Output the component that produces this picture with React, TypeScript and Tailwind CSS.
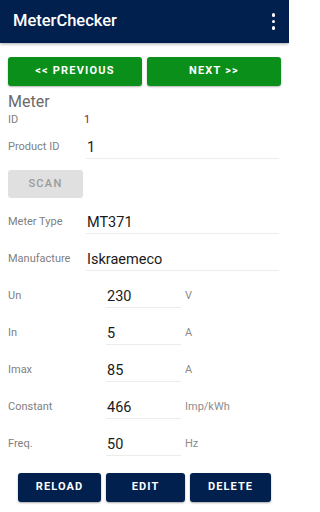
import React from "react";

const font = { fontFamily: "Roboto, 'Liberation Sans', sans-serif" };

interface Row {
  label: string;
  value: string;
  unit?: string;
}

const TEXT_ROWS: Row[] = [
  { label: "Meter Type", value: "MT371" },
  { label: "Manufacture", value: "Iskraemeco" },
];

const NUM_ROWS: Row[] = [
  { label: "Un", value: "230", unit: "V" },
  { label: "In", value: "5", unit: "A" },
  { label: "Imax", value: "85", unit: "A" },
  { label: "Constant", value: "466", unit: "Imp/kWh" },
  { label: "Freq.", value: "50", unit: "Hz" },
];

function Field({ value, className }: { value: string; className: string }) {
  return (
    <div className={`h-[21px] border-b border-[#ececec] text-[14.5px] leading-[20px] text-[#1a1a1a] ${className}`}>
      {value}
    </div>
  );
}

export default function App() {
  return (
    <div className="w-[289px] h-[512px] bg-white overflow-hidden" style={font}>
      <div className="h-[43px] bg-[#01204e] flex items-center justify-between pl-[13px] pr-[14px] shadow-[0_1px_3px_rgba(0,0,0,0.35)] relative">
        <span className="text-white text-[16.5px] font-medium">MeterChecker</span>
        <div className="flex flex-col gap-[3px]">
          <span className="w-[3.5px] h-[3.5px] rounded-full bg-white" />
          <span className="w-[3.5px] h-[3.5px] rounded-full bg-white" />
          <span className="w-[3.5px] h-[3.5px] rounded-full bg-white" />
        </div>
      </div>

      <div className="px-2 pt-[14px]">
        <div className="grid grid-cols-2 gap-[5px]">
          <button className="h-[29px] rounded-[3px] bg-[#0b8f1b] text-white text-[11px] font-bold tracking-[0.11em] shadow-[0_1px_2px_rgba(0,0,0,0.3)]">
            &lt;&lt; PREVIOUS
          </button>
          <button className="h-[29px] rounded-[3px] bg-[#0b8f1b] text-white text-[11px] font-bold tracking-[0.11em] shadow-[0_1px_2px_rgba(0,0,0,0.3)]">
            NEXT &gt;&gt;
          </button>
        </div>

        <div className="mt-[6px] h-[20px] text-[16px] leading-[20px] text-[#6a6a6a]">Meter</div>

        <div className="h-[17px] flex items-center text-[11px]">
          <span className="w-[76px] text-[#808080]">ID</span>
          <span className="text-[#8a1c1c]">1</span>
        </div>

        <div className="h-[36px] flex items-center">
          <span className="w-[78px] text-[11px] text-[#808080]">Product ID</span>
          <Field value="1" className="flex-1 pl-[1px] mr-[2px] mt-[2px]" />
        </div>

        <button className="mt-[5px] w-[75px] h-[28px] rounded-[3px] bg-[#e0e0e0] text-[#9a9a9a] text-[11px] font-medium tracking-[0.12em]">
          SCAN
        </button>

        <div className="mt-[6px]">
          {TEXT_ROWS.map((r) => (
            <div key={r.label} className="h-[37px] flex items-center">
              <span className="w-[78px] text-[11px] text-[#808080]">{r.label}</span>
              <Field value={r.value} className="flex-1 pl-[1px] mr-[2px] mt-[2px]" />
            </div>
          ))}
          {NUM_ROWS.map((r) => (
            <div key={r.label} className="h-[37px] flex items-center">
              <span className="w-[98px] text-[11px] text-[#808080]">{r.label}</span>
              <Field value={r.value} className="w-[75px] pl-[1px] mt-[2px]" />
              <span className="ml-[4px] text-[11px] text-[#8c8c8c]">{r.unit}</span>
            </div>
          ))}
        </div>

        <div className="mt-[10px] flex justify-center gap-[5px]">
          <button className="w-[83px] h-[29px] rounded-[3px] bg-[#01204e] text-white text-[11px] font-bold tracking-[0.1em] shadow-[0_1px_2px_rgba(0,0,0,0.35)]">
            RELOAD
          </button>
          <button className="w-[79px] h-[29px] rounded-[3px] bg-[#01204e] text-white text-[11px] font-bold tracking-[0.1em] shadow-[0_1px_2px_rgba(0,0,0,0.35)]">
            EDIT
          </button>
          <button className="w-[81px] h-[29px] rounded-[3px] bg-[#01204e] text-white text-[11px] font-bold tracking-[0.1em] shadow-[0_1px_2px_rgba(0,0,0,0.35)]">
            DELETE
          </button>
        </div>
      </div>
    </div>
  );
}
